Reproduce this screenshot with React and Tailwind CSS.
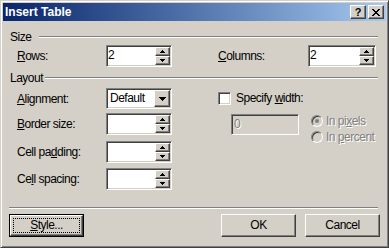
import React from "react";

const raised =
  "bg-[#d4d0c8] border border-t-white border-l-white border-r-[#404040] border-b-[#404040] shadow-[inset_-1px_-1px_0_#808080]";
const sunken =
  "border border-t-[#808080] border-l-[#808080] border-r-white border-b-white shadow-[inset_1px_1px_0_#404040,inset_-1px_-1px_0_#d4d0c8]";
const disabledText = "text-[#808080] [text-shadow:1px_1px_0_#ffffff]";
const txt = "text-[12px] tracking-[-0.5px] whitespace-nowrap";

function UpArrow() {
  return (
    <svg width="5" height="3" shapeRendering="crispEdges">
      <rect x="2" y="0" width="1" height="1" fill="#000" />
      <rect x="1" y="1" width="3" height="1" fill="#000" />
      <rect x="0" y="2" width="5" height="1" fill="#000" />
    </svg>
  );
}

function DownArrow({ big }) {
  if (big) {
    return (
      <svg width="7" height="4" shapeRendering="crispEdges">
        <rect x="0" y="0" width="7" height="1" fill="#000" />
        <rect x="1" y="1" width="5" height="1" fill="#000" />
        <rect x="2" y="2" width="3" height="1" fill="#000" />
        <rect x="3" y="3" width="1" height="1" fill="#000" />
      </svg>
    );
  }
  return (
    <svg width="5" height="3" shapeRendering="crispEdges">
      <rect x="0" y="0" width="5" height="1" fill="#000" />
      <rect x="1" y="1" width="3" height="1" fill="#000" />
      <rect x="2" y="2" width="1" height="1" fill="#000" />
    </svg>
  );
}

function CloseGlyph() {
  // classic 8x7 close cross
  const rows = ["##....##", ".##..##.", "..####..", "...##...", "..####..", ".##..##.", "##....##"];
  return (
    <svg width="8" height="7" shapeRendering="crispEdges">
      {rows.map((r, y) =>
        r.split("").map((c, x) =>
          c === "#" ? <rect key={`${x}-${y}`} x={x} y={y} width="1" height="1" fill="#000" /> : null
        )
      )}
    </svg>
  );
}

function SpinBox({ value, w }) {
  return (
    <div className={`${sunken} ${w} h-[22px] bg-white p-[1px] flex`}>
      <div className={`flex-1 ${txt} leading-[16px] text-black`}>{value}</div>
      <div className="w-[15px] flex flex-col">
        <div className={`${raised} flex-1 flex items-center justify-center`}>
          <UpArrow />
        </div>
        <div className={`${raised} flex-1 flex items-center justify-center`}>
          <DownArrow />
        </div>
      </div>
    </div>
  );
}

function Label({ children, w = "w-[89px]" }) {
  return <div className={`${w} ${txt} leading-[16px] text-black`}>{children}</div>;
}

function HeaderRow({ text, w }) {
  return (
    <div className="flex items-center h-[14px]">
      <div className={`${w} pl-[1px] ${txt} leading-[14px]`}>{text}</div>
      <div className="flex-1 h-[2px] border-t border-t-[#808080] border-b border-b-white" />
    </div>
  );
}

function Radio({ checked }) {
  return (
    <div className="w-[12px] h-[12px] rounded-full border border-t-[#808080] border-l-[#808080] border-r-white border-b-white bg-[#d4d0c8] shadow-[inset_1px_1px_0_#404040] flex items-center justify-center">
      {checked && <div className="w-[4px] h-[4px] rounded-full bg-[#808080]" />}
    </div>
  );
}

function Button({ children, isDefault }) {
  if (isDefault) {
    return (
      <div className="w-[75px] h-[23px] border border-black">
        <div className={`${raised} w-full h-full p-[2px]`}>
          <div className={`w-full h-full border border-dotted border-black flex items-center justify-center ${txt} leading-[15px]`}>
            {children}
          </div>
        </div>
      </div>
    );
  }
  return (
    <div className={`${raised} w-[75px] h-[23px] flex items-center justify-center ${txt} leading-[15px]`}>
      {children}
    </div>
  );
}

export default function App() {
  return (
    <div className="w-[389px] h-[248px] bg-[#d4d0c8] border border-t-[#d4d0c8] border-l-[#d4d0c8] border-r-[#404040] border-b-[#404040] shadow-[inset_1px_1px_0_#ffffff,inset_-1px_-1px_0_#808080] p-[2px] flex flex-col font-['Liberation_Sans',sans-serif] text-black select-none">
      {/* Title bar */}
      <div className="h-[18px] flex items-center bg-gradient-to-r from-[#0a246a] to-[#a6caf0] pl-[2px] pr-[2px]">
        <div className="flex-1 font-bold text-[12px] leading-[18px] text-white">Insert Table</div>
        <div className={`${raised} w-[16px] h-[14px] flex items-center justify-center font-bold text-[11px] leading-[12px]`}>
          ?
        </div>
        <div className={`${raised} w-[16px] h-[14px] ml-[2px] flex items-center justify-center`}>
          <CloseGlyph />
        </div>
      </div>

      {/* Body */}
      <div className="pl-[6px] pr-[8px] flex flex-col">
        <div className="mt-[9px]">
          <HeaderRow text="Size" w="w-[30px]" />
        </div>

        <div className="flex items-center mt-[1px] h-[22px] pl-[8px]">
          <Label>
            <u>R</u>ows:
          </Label>
          <SpinBox value="2" w="w-[66px]" />
          <Label w="w-[90px] ml-[46px]">
            <u>C</u>olumns:
          </Label>
          <SpinBox value="2" w="w-[68px]" />
        </div>

        <div className="mt-[4px]">
          <HeaderRow text="Layout" w="w-[36px]" />
        </div>

        <div className="flex mt-[3px]">
          {/* left column */}
          <div className="flex flex-col pl-[8px]">
            <div className="flex items-center h-[21px]">
              <Label>
                <u>A</u>lignment:
              </Label>
              <div className={`${sunken} w-[66px] h-[21px] bg-white p-[1px] flex`}>
                <div className={`flex-1 pl-[2px] ${txt} leading-[17px]`}>Default</div>
                <div className={`${raised} w-[16px] flex items-center justify-center`}>
                  <DownArrow big />
                </div>
              </div>
            </div>
            <div className="flex items-center mt-[4px] h-[22px]">
              <Label>
                <u>B</u>order size:
              </Label>
              <SpinBox value="" w="w-[66px]" />
            </div>
            <div className="flex items-center mt-[6px] h-[22px]">
              <Label>
                Cell pa<u>d</u>ding:
              </Label>
              <SpinBox value="" w="w-[66px]" />
            </div>
            <div className="flex items-center mt-[5px] h-[22px]">
              <Label>
                Ce<u>l</u>l spacing:
              </Label>
              <SpinBox value="" w="w-[66px]" />
            </div>
          </div>

          {/* right column */}
          <div className="flex flex-col ml-[46px]">
            <div className="flex items-center mt-[4px] h-[13px]">
              <div className={`${sunken} w-[13px] h-[13px] bg-white`} />
              <div className={`ml-[5px] ${txt} leading-[15px]`}>
                Specify <u>w</u>idth:
              </div>
            </div>
            <div className="flex mt-[8px] pl-[13px]">
              <div className={`${sunken} w-[68px] h-[21px] mt-[1px] bg-[#d4d0c8] p-[1px]`}>
                <div className={`pl-[1px] ${txt} leading-[16px] ${disabledText}`}>0</div>
              </div>
              <div className="flex flex-col ml-[12px]">
                <div className="flex items-center h-[16px]">
                  <Radio checked />
                  <div className={`ml-[3px] ${txt} leading-[15px] ${disabledText}`}>
                    In pi<u>x</u>els
                  </div>
                </div>
                <div className="flex items-center h-[16px]">
                  <Radio />
                  <div className={`ml-[3px] ${txt} leading-[15px] ${disabledText}`}>
                    In <u>p</u>ercent
                  </div>
                </div>
              </div>
            </div>
          </div>
        </div>

        <div className="mt-[17px] h-[2px] border-t border-t-[#808080] border-b border-b-white" />

        <div className="flex mt-[5px] -mr-[2px]">
          <Button isDefault>
            <span>
              <u>S</u>tyle...
            </span>
          </Button>
          <div className="flex-1" />
          <Button>OK</Button>
          <div className="w-[9px]" />
          <Button>Cancel</Button>
        </div>
      </div>
    </div>
  );
}
